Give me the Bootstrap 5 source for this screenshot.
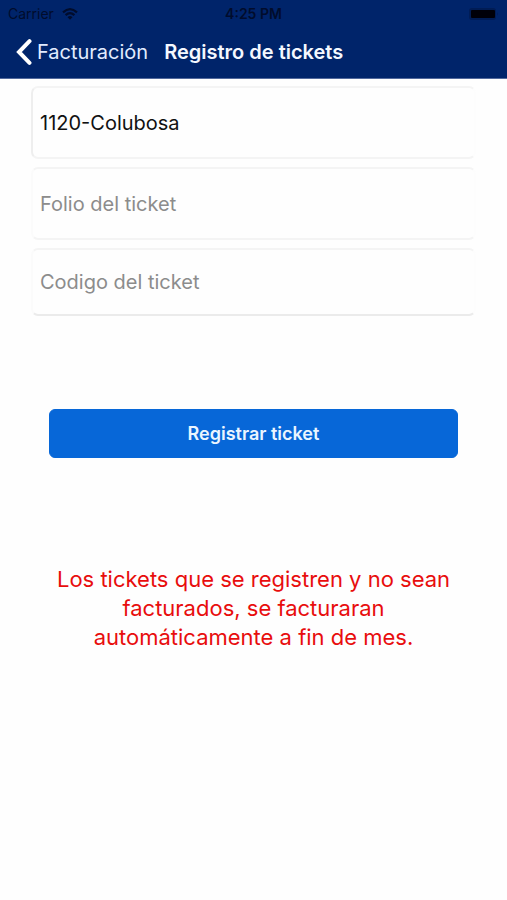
<!DOCTYPE html>
<html lang="es">
<head>
<meta charset="utf-8">
<meta name="viewport" content="width=device-width, initial-scale=1">
<title>Registro de tickets</title>
<link href="https://cdn.jsdelivr.net/npm/bootstrap@5.3.0/dist/css/bootstrap.min.css" rel="stylesheet">
<style>
  body { font-family: Inter, "Liberation Sans", sans-serif; color: #111; background: #fefefe; }
  .app-header { background: #00246a; border-bottom: 1px solid #52699c; }
  .status-bar { height: 28px; padding: 0 8px; font-size: 14px; line-height: 28px; color: #010c2c; }
  .status-time { font-weight: 600; }
  .title-bar { height: 50px; padding: 0 16px 2px; gap: 16px; font-size: 20px; line-height: 24px; }
  .back-link { gap: 5px; color: #e2ecff; }
  .page-title { font-size: 20px; line-height: 24px; font-weight: 600; color: #f4f8ff; }
  .ticket-form { padding: 7px 31px 0; }
  .ticket-fields { gap: 8px; }
  .ticket-input { height: 73px; padding: 0 7px; font-size: 20px; color: #111; background: #fefefe; border: 2px solid #f4f4f4; border-left-color: #fbfbfb; border-right-color: #fdfdfd; border-radius: 7px; }
  .ticket-input.selected-store { border-left-color: #eee; }
  .ticket-input.short-field { height: 68px; border-bottom-color: #ebebeb; }
  .ticket-input::placeholder { color: #8c8c8c; }
  .submit-row { padding: 93px 18px 0; }
  .btn-register { height: 49px; font-size: 18px; font-weight: 600; --bs-btn-color: #eaf5ff; --bs-btn-bg: #0767d8; --bs-btn-border-color: #0767d8; --bs-btn-hover-color: #fff; --bs-btn-hover-bg: #0559bd; --bs-btn-border-radius: 6px; }
  .notice { padding: 107px 48px 0; font-size: 22px; line-height: 29px; color: #e80d0d; }
</style>
<script src="https://cdn.jsdelivr.net/npm/bootstrap@5.3.0/dist/js/bootstrap.bundle.min.js"></script>
</head>
<body>
<header class="app-header">
  <div class="status-bar row g-0">
    <div class="col d-flex align-items-center gap-2">
      <span>Carrier</span>
      <svg width="16" height="12" viewBox="0 0 16 12" fill="none" stroke="currentColor" stroke-width="2.2" aria-hidden="true">
        <path d="M1 4.4Q8-2 15 4.4M3.6 7.1Q8 3 12.4 7.1"/>
        <path d="M8 11.8 5.500 9.200Q8 7 10.500 9.200Z" fill="currentColor" stroke="none"/>
      </svg>
    </div>
    <div class="col-auto status-time">4:25 PM</div>
    <div class="col d-flex align-items-center justify-content-end">
      <svg width="31" height="14" viewBox="0 0 31 14" aria-hidden="true">
        <rect x="1" y="1" width="27" height="12" rx="3" fill="#001c55"/>
        <rect x="3" y="3" width="24" height="8" rx="1" fill="#000008"/>
        <path d="M29 5v4q1.500-2 0-4" fill="#001c55"/>
      </svg>
    </div>
  </div>
  <nav class="title-bar d-flex align-items-center" aria-label="Principal">
    <a href="#" class="back-link d-flex align-items-center text-decoration-none">
      <svg width="16" height="26" viewBox="0 0 16 26" fill="none" stroke="#fff" stroke-width="4" stroke-linecap="round" stroke-linejoin="miter" aria-hidden="true"><path d="M13.500 2.200 3 13l10.500 10.800"/></svg>
      <span>Facturación</span>
    </a>
    <h1 class="page-title m-0">Registro de tickets</h1>
  </nav>
</header>
<main>
  <form class="ticket-form">
    <div class="ticket-fields d-flex flex-column">
      <input type="text" class="form-control ticket-input selected-store" aria-label="Sucursal" value="1120-Colubosa">
      <input type="text" class="form-control ticket-input" aria-label="Folio del ticket" placeholder="Folio del ticket">
      <input type="text" class="form-control ticket-input short-field" aria-label="Codigo del ticket" placeholder="Codigo del ticket">
    </div>
    <div class="submit-row">
      <button type="button" class="btn btn-register w-100">Registrar ticket</button>
    </div>
  </form>
  <p class="notice text-center m-0">Los tickets que se registren y no sean facturados, se facturaran automáticamente a fin de mes.</p>
</main>
</body>
</html>
